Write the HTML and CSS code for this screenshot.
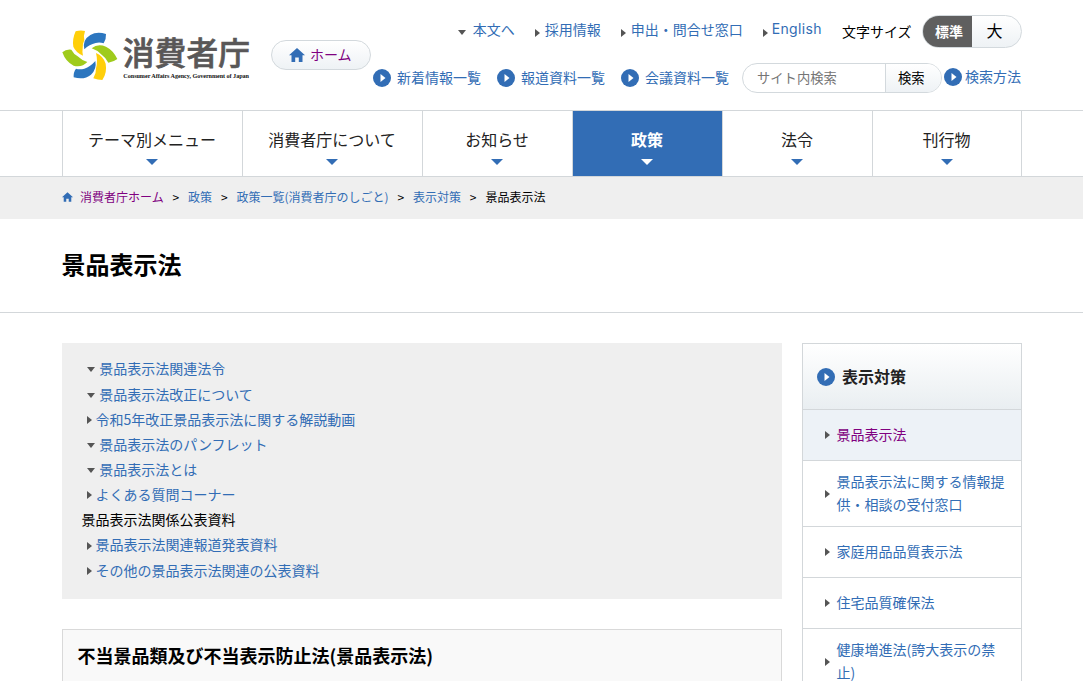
FILE: index.html
```html
<!DOCTYPE html>
<html lang="ja">
<head>
<meta charset="utf-8">
<title>景品表示法 | 消費者庁</title>
<link rel="stylesheet" href="styles.css">
</head>
<body>
<svg class="defs" width="0" height="0">
  <symbol id="play" viewBox="0 0 18 18"><circle cx="9" cy="9" r="9" fill="#326db5"/><path d="M7.5 5 12.5 9 7.5 13z" fill="#fff"/></symbol>
  <symbol id="home" viewBox="0 0 16 14"><path d="M8 0 16 7.3H13.5V14H9.8V9.6H6.2V14H2.5V7.3H0z" fill="#326db5"/></symbol>
</svg>
<header class="header wrap">
  <a class="logo">
    <svg viewBox="0 0 630 210" width="210" height="70">
      <path fill="#ffcf0a" d="M77 34Q91 30 105 33Q100 47 103 60Q97 72 98 86Q96 96 99 107Q77 97 70 80Q66 58 77 34z"/>
      <path fill="#2c76bf" d="M103 88Q96 60 121 45Q141 33 168 42Q169 57 161 70Q149 66 137 69Q118 73 103 88z"/>
      <path fill="#9fcb1c" d="M125 85Q143 70 168 80Q190 91 202 117Q191 126 175 128Q168 113 155 104Q143 91 125 85z"/>
      <path fill="#ffcf0a" d="M138 99Q160 108 167 131Q172 158 157 180Q143 180 130 175Q139 161 138 145Q144 124 138 99z"/>
      <path fill="#2c76bf" d="M136 123Q141 147 123 164Q103 181 71 172Q70 156 78 146Q89 150 103 146Q121 140 136 123z"/>
      <path fill="#9fcb1c" d="M37 97Q48 87 64 89Q71 102 83 109Q95 121 112 126Q96 143 71 137Q47 126 37 97z"/>
      <text class="logo-name" x="218" y="135" textLength="382">消費者庁</text>
      <text class="logo-sub" x="220" y="174" textLength="377">Consumer Affairs Agency, Government of Japan</text>
    </svg>
  </a>
  <a class="home visited"><svg width="16" height="14"><use href="#home"/></svg><span>ホーム</span></a>
  <div class="tools">
    <div class="row row-top">
      <a class="jump"><i class="tri down"></i>本文へ</a>
      <a><i class="tri"></i>採用情報</a>
      <a><i class="tri"></i>申出・問合せ窓口</a>
      <a class="english"><i class="tri"></i>English</a>
      <span class="size-label">文字サイズ</span>
      <div class="sizes"><b>標準</b><span>大</span></div>
    </div>
    <div class="row row-bottom">
      <a class="circ"><svg width="18" height="18"><use href="#play"/></svg><span>新着情報一覧</span></a>
      <a class="circ"><svg width="18" height="18"><use href="#play"/></svg><span>報道資料一覧</span></a>
      <a class="circ"><svg width="18" height="18"><use href="#play"/></svg><span>会議資料一覧</span></a>
      <div class="search"><span class="field">サイト内検索</span><span class="go">検索</span></div>
      <a class="method"><svg width="18" height="18"><use href="#play"/></svg><span>検索方法</span></a>
    </div>
  </div>
</header>
<nav class="nav">
  <ul class="wrap">
    <li class="wide">テーマ別メニュー</li>
    <li class="wide">消費者庁について</li>
    <li>お知らせ</li>
    <li class="current">政策</li>
    <li>法令</li>
    <li>刊行物</li>
  </ul>
</nav>
<div class="crumbs">
  <div class="wrap">
    <svg width="11" height="10"><use href="#home"/></svg>
    <a class="visited">消費者庁ホーム</a><i>&gt;</i><a>政策</a><i>&gt;</i><a>政策一覧(消費者庁のしごと)</a><i>&gt;</i><a>表示対策</a><i>&gt;</i><span>景品表示法</span>
  </div>
</div>
<div class="title"><h1 class="wrap">景品表示法</h1></div>
<div class="content wrap">
  <main>
    <ul class="index">
      <li><a class="in"><i class="tri down"></i>景品表示法関連法令</a></li>
      <li><a class="in"><i class="tri down"></i>景品表示法改正について</a></li>
      <li><a><i class="tri"></i>令和5年改正景品表示法に関する解説動画</a></li>
      <li><a class="in"><i class="tri down"></i>景品表示法のパンフレット</a></li>
      <li><a class="in"><i class="tri down"></i>景品表示法とは</a></li>
      <li><a><i class="tri"></i>よくある質問コーナー</a></li>
      <li>景品表示法関係公表資料</li>
      <li><a><i class="tri"></i>景品表示法関連報道発表資料</a></li>
      <li><a><i class="tri"></i>その他の景品表示法関連の公表資料</a></li>
    </ul>
    <h2>不当景品類及び不当表示防止法(景品表示法)</h2>
  </main>
  <aside>
    <h3><svg width="18" height="18"><use href="#play"/></svg><span>表示対策</span></h3>
    <a class="here visited"><i class="tri"></i><span>景品表示法</span></a>
    <a><i class="tri"></i><span>景品表示法に関する情報提供・相談の受付窓口</span></a>
    <a><i class="tri"></i><span>家庭用品品質表示法</span></a>
    <a><i class="tri"></i><span>住宅品質確保法</span></a>
    <a><i class="tri"></i><span>健康増進法(誇大表示の禁止)</span></a>
  </aside>
</div>
</body>
</html>
```
FILE: styles.css
```css
* { box-sizing: border-box; margin: 0; padding: 0; }
html { height: 100%; overflow: hidden; }
body { height: 100%; overflow: hidden; background: #fff; color: #000; font: 14px/20px "Noto Sans CJK JP", sans-serif; }
ul { list-style: none; }
i { font-style: normal; }
a { color: #326db5; white-space: nowrap; }
a.visited { color: #800080; }
svg { flex: none; display: block; }
.defs { position: absolute; }
.wrap { width: 960px; margin: 0 auto 0 62px; }
.tri { flex: none; width: 0; height: 0; border: solid transparent; border-width: 4px 0 4px 5px; border-left-color: #555; }
.tri.down { border-width: 5px 4px 0; border-color: #555 transparent transparent; }

.header { display: flex; height: 110px; }
.logo { width: 209px; padding-top: 20px; }
.logo svg { margin-left: -12px; }
.logo-name { font: 500 95px "Noto Sans CJK JP", sans-serif; fill: #595757; stroke: #595757; stroke-width: 2; }
.logo-sub { font: bold 18.5px "Liberation Serif", serif; fill: #111; }
.home { display: flex; align-items: center; gap: 5px; width: 100px; height: 30px; margin-top: 40px; padding-left: 17px; border: 1px solid #d3d9dd; border-radius: 15px; background: linear-gradient(#fff, #eef2f5); }
.home span { padding-bottom: 2px; }
.tools { flex: 1; padding-top: 15px; }
.row { display: flex; align-items: center; justify-content: flex-end; }
.row-top { height: 33px; }
.row-top a { display: flex; align-items: center; gap: 5px; margin: -6px 0 0 20px; }
.row-top .tri { margin-top: 8px; }
.row-top .jump { gap: 6.5px; }
.row-top .english { gap: 4px; font-family: Inter, sans-serif; letter-spacing: 0.35px; }
.size-label { margin: -2px 10.5px 0 20px; }
.sizes { display: flex; width: 100px; height: 33px; border: 1px solid #d3d9dd; border-radius: 17px; overflow: hidden; line-height: 29px; text-align: center; background: linear-gradient(#fff, #eef2f5); }
.sizes b { width: 50px; margin: -1px 0 -1px -1px; line-height: 32px; background: #5f5f5f; color: #fff; padding-left: 4px; }
.sizes span { flex: 1; padding-right: 4px; font-size: 16px; }
.row-bottom { height: 30px; margin-top: 15px; padding-right: 1px; }
.circ { display: flex; align-items: center; gap: 6px; margin-right: 16px; }
.circ span, .method span, h3 span { padding-bottom: 2px; }
.search { display: flex; width: 200px; height: 30px; margin-left: -3px; border: 1px solid #d3d9dd; border-radius: 15px; overflow: hidden; line-height: 28px; font-size: 13.3px; }
.field { width: 143px; padding-left: 14px; border-right: 1px solid #d3d9dd; color: #757575; }
.go { flex: 1; padding-left: 12px; background: linear-gradient(#fff, #eef2f5); }
.method { display: flex; align-items: center; gap: 3px; margin: -2px 0 0 2px; }

.nav { height: 67px; border: solid #d3d7da; border-width: 1px 0; }
.nav ul { display: flex; height: 65px; border-right: 1px solid #d3d7da; }
.nav li { display: flex; flex-direction: column; align-items: center; width: 150px; padding: 16px 1px 0 0; border-left: 1px solid #d3d7da; font-size: 16px; line-height: 24px; color: #222; }
.nav li.wide { width: 180px; }
.nav li:last-child { width: 149px; }
.nav li::after { content: ""; margin-top: 8px; border: 6px solid transparent; border-top-color: #326db5; border-bottom: 0; }
.nav .current { background: #326db5; color: #fff; font-weight: bold; }
.nav .current::after { border-top-color: #fff; }

.crumbs { height: 42px; background: #efefef; font-size: 12px; }
.crumbs .wrap { display: flex; align-items: center; height: 40px; }
.crumbs svg { margin-right: 7px; }
.crumbs i { width: 24.4px; text-align: center; }
.title { height: 94px; border-bottom: 1px solid #d3d7da; }
h1 { padding-top: 27px; font-size: 24px; line-height: 36px; text-indent: -0.5px; }

.content { display: flex; justify-content: space-between; align-items: flex-start; padding-top: 30px; }
main { width: 720px; }
.index { height: 256px; padding: 13.4px 19.6px; background: #efefef; line-height: 25.15px; }
.index a { display: flex; align-items: center; gap: 4px; padding-left: 5px; }
.index a.in { gap: 4.6px; }
.index .tri { margin-top: 1px; }
.index .tri.down { margin-top: 2px; }
h2 { height: 72px; margin-top: 30px; padding: 12px 14.5px; border: 1px solid #d9d9d9; background: #f9f9f9; font-size: 18px; line-height: 27px; }
aside { width: 220px; border: 1px solid #d3d7da; }
h3 { display: flex; align-items: center; gap: 7px; height: 65px; padding-left: 14px; font-size: 16px; color: #222; background: linear-gradient(#fff, #e9eef1); }
aside a { display: flex; align-items: center; gap: 6.5px; min-height: 51px; padding: 8.5px 12px 10.5px 22px; border-top: 1px solid #d3d7da; line-height: 23px; white-space: normal; }
aside .tri { margin-top: 2px; }
.here { background: #edf2f7; }
```
